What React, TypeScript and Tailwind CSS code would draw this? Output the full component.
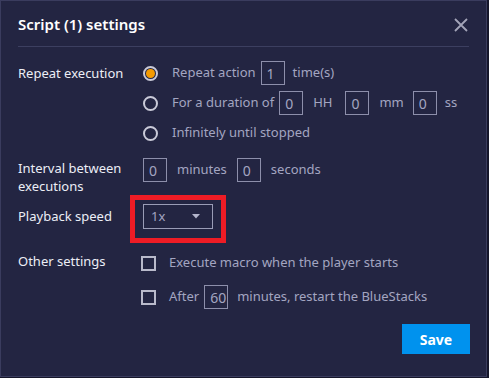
import React from "react";

const font = { fontFamily: '"Noto Sans", "Open Sans", sans-serif' };

const NumBox = ({ value, w = "w-[24px]" }: { value: string; w?: string }) => (
    <span className={`flex h-[24px] ${w} shrink-0 items-center border border-[#8d8fab] pl-[5px] text-[14px] text-[#a3a5c1]`}>
        {value}
    </span>
);

const Radio = ({ checked }: { checked?: boolean }) => (
    <span className="flex h-[15px] w-[15px] shrink-0 items-center justify-center rounded-full border-2 border-[#c9cad8]">
        {checked && <span className="h-[9px] w-[9px] rounded-full bg-[#f59b00]" />}
    </span>
);

const Checkbox = () => <span className="-ml-[2px] h-[15px] w-[15px] shrink-0 border-2 border-[#b9bacb]" />;

const App: React.FC = () => {
    return (
        <div className="h-[378px] w-[489px] bg-[#15162a]" style={font}>
            <div className="flex h-[377px] w-[487px] flex-col border border-[#3a3c5e] bg-[#232542]">
                {/* header */}
                <div className="flex h-[45px] items-center justify-between pl-[17px] pr-[17px] pt-[2px]">
                    <h1 className="text-[15px] font-semibold text-white">Script (1) settings</h1>
                    <svg width="14" height="14" viewBox="0 0 14 14" className="mr-[1px]">
                        <path d="M1 1 L13 13 M13 1 L1 13" stroke="#a3a4b8" strokeWidth="1.8" />
                    </svg>
                </div>
                <div className="mx-[17px] h-px bg-[#3c3f60]" />

                <div className="flex flex-col whitespace-nowrap pl-[17px] pr-[16px] text-[13px]">
                    {/* repeat execution */}
                    <div className="mt-[14px] flex">
                        <div className="w-[125px] shrink-0 pt-[3px] text-[#eceef6]">Repeat execution</div>
                        <div className="flex flex-col gap-[6px] text-[#a3a5c1]">
                            <div className="flex h-[24px] items-center">
                                <Radio checked />
                                <span className="ml-[14px] mr-[5px]">Repeat action</span>
                                <NumBox value="1" />
                                <span className="ml-[8px]">time(s)</span>
                            </div>
                            <div className="flex h-[24px] items-center">
                                <Radio />
                                <span className="ml-[14px] mr-[5px]">For a duration of</span>
                                <NumBox value="0" />
                                <span className="ml-[10px] mr-[13px]">HH</span>
                                <NumBox value="0" />
                                <span className="ml-[10px] mr-[9px]">mm</span>
                                <NumBox value="0" />
                                <span className="ml-[8px]">ss</span>
                            </div>
                            <div className="flex h-[24px] items-center">
                                <Radio />
                                <span className="ml-[14px]">Infinitely until stopped</span>
                            </div>
                        </div>
                    </div>

                    {/* interval */}
                    <div className="mt-[13px] flex">
                        <div className="w-[125px] shrink-0 pt-[1px] leading-[18px] text-[#eceef6]">
                            Interval between
                            <br />
                            executions
                        </div>
                        <div className="flex h-[24px] items-center text-[#a3a5c1]">
                            <NumBox value="0" />
                            <span className="ml-[10px] mr-[10px]">minutes</span>
                            <NumBox value="0" />
                            <span className="ml-[10px]">seconds</span>
                        </div>
                    </div>

                    {/* playback speed */}
                    <div className="mt-[9px] flex items-center">
                        <div className="w-[125px] shrink-0 text-[#eceef6]">Playback speed</div>
                        <div className="relative flex h-[25px] w-[70px] items-center justify-between border border-[#9a9cb6] pl-[7px] pr-[12px] text-[#a3a5c1]">
                            <span>1x</span>
                            <svg width="8" height="5" viewBox="0 0 8 5">
                                <path d="M0 0 H8 L4 4.5 Z" fill="#b3b5cc" />
                            </svg>
                            <div className="pointer-events-none absolute bottom-[-15px] left-[-14px] right-[-14px] top-[-10px] border-[5px] border-[#ee1c25]" />
                        </div>
                    </div>

                    {/* other settings */}
                    <div className="mt-[23px] flex">
                        <div className="w-[125px] shrink-0 leading-[18px] text-[#eceef6]">Other settings</div>
                        <div className="flex flex-col gap-[10px] text-[#a3a5c1]">
                            <div className="-mt-[1px] flex h-[24px] items-center">
                                <Checkbox />
                                <span className="ml-[13px]">Execute macro when the player starts</span>
                            </div>
                            <div className="flex h-[24px] items-center">
                                <Checkbox />
                                <span className="ml-[13px] mr-[5px]">After</span>
                                <NumBox value="60" />
                                <span className="ml-[9px]">minutes, restart the BlueStacks</span>
                            </div>
                        </div>
                    </div>

                    <div className="mt-[15px] flex justify-end">
                        <button className="h-[30px] w-[68px] bg-[#0092ee] text-[14px] font-bold text-white">Save</button>
                    </div>
                </div>
            </div>
        </div>
    );
};

export default App;
